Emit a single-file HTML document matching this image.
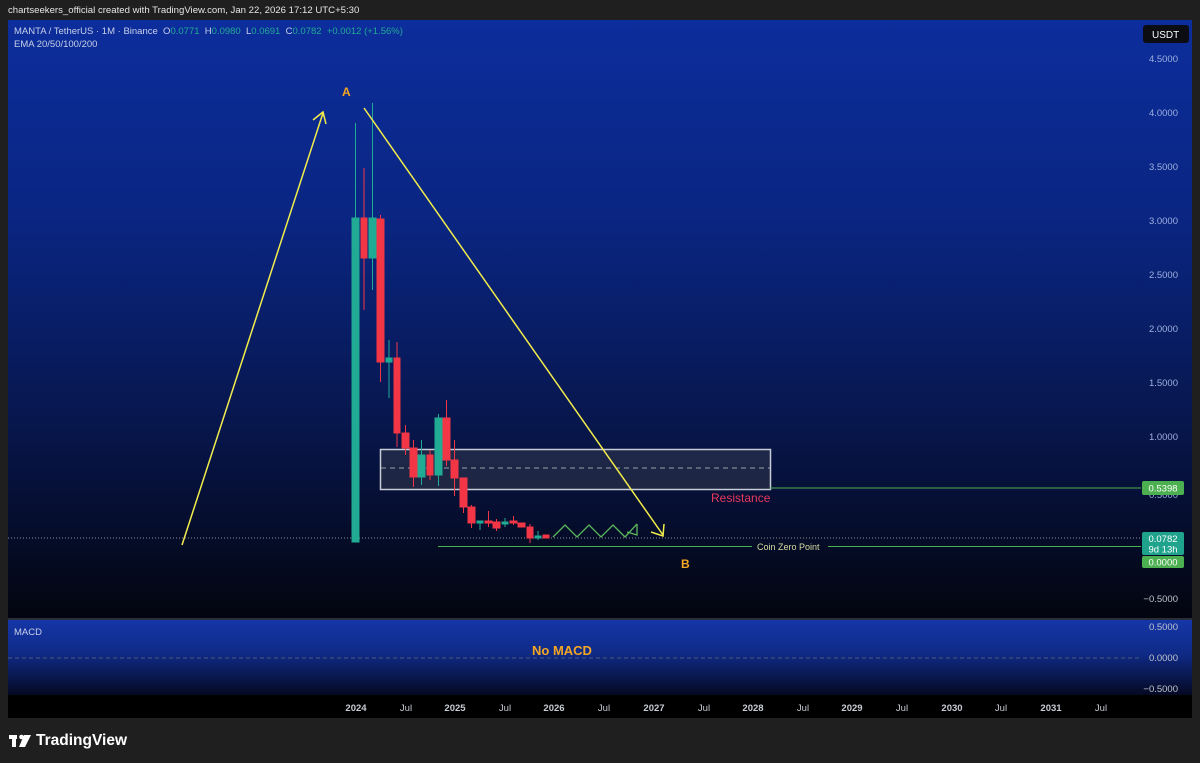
<!DOCTYPE html>
<html><head><meta charset="utf-8"><style>
html,body{margin:0;padding:0;background:#1f1f1f;width:1200px;height:763px;overflow:hidden;font-family:"Liberation Sans",sans-serif}
.t{position:absolute;white-space:nowrap}
</style></head><body>
<div class="t" style="left:8px;top:5px;font-size:9.6px;color:#e6e6e6">chartseekers_official created with TradingView.com, Jan 22, 2026 17:12 UTC+5:30</div>
<svg width="1200" height="763" style="position:absolute;left:0;top:0" xmlns="http://www.w3.org/2000/svg">
<defs>
<linearGradient id="g1" x1="0" y1="0" x2="0" y2="1">
<stop offset="0" stop-color="#0c2d9c"/><stop offset="0.35" stop-color="#0a2580"/><stop offset="0.7" stop-color="#071548"/><stop offset="1" stop-color="#03050f"/></linearGradient>
<linearGradient id="g2" x1="0" y1="0" x2="0" y2="1">
<stop offset="0" stop-color="#1536a8"/><stop offset="0.35" stop-color="#0f2a85"/><stop offset="0.75" stop-color="#050a25"/><stop offset="1" stop-color="#000"/></linearGradient>
</defs>
<rect x="8" y="20" width="1184" height="598" fill="url(#g1)"/>
<rect x="8" y="618" width="1184" height="2" fill="#2a2e3a"/>
<rect x="8" y="620" width="1184" height="98" fill="url(#g2)"/>
<rect x="8" y="695" width="1184" height="23" fill="#000"/>
<rect x="1143" y="25" width="46" height="18" rx="3" fill="#0b0d12"/>
<text x="1152" y="38" font-size="10" fill="#fff">USDT</text>
<rect x="380.5" y="449.5" width="390" height="40" fill="rgba(60,65,80,0.45)" stroke="#c8ccd4" stroke-width="1.5"/>
<line x1="381" y1="468" x2="770" y2="468" stroke="#9aa0ab" stroke-dasharray="5,4"/>
<line x1="770" y1="488" x2="1141" y2="488" stroke="#4caf50"/>
<line x1="8" y1="538" x2="1141" y2="538" stroke="#8a8f99" stroke-dasharray="1,2"/>
<line x1="438" y1="546.5" x2="752" y2="546.5" stroke="#4caf50"/>
<line x1="828" y1="546.5" x2="1141" y2="546.5" stroke="#4caf50"/>
<line x1="8" y1="658" x2="1141" y2="658" stroke="#4a5a7a" stroke-dasharray="4,3"/>
<g stroke-width="1">
<g fill="#22ab94" stroke="#22ab94">
<line x1="355.5" y1="123" x2="355.5" y2="542"/><rect x="352" y="218" width="7" height="324"/>
<line x1="372.5" y1="103" x2="372.5" y2="290"/><rect x="369" y="218" width="7" height="40"/>
<line x1="389" y1="340" x2="389" y2="398"/><rect x="386" y="358" width="6" height="4"/>
<line x1="421.5" y1="440" x2="421.5" y2="485"/><rect x="418" y="455" width="7" height="22"/>
<line x1="438.5" y1="414" x2="438.5" y2="486"/><rect x="435" y="418" width="7" height="57"/>
<line x1="480" y1="521" x2="480" y2="530"/><rect x="477" y="521" width="6" height="2"/>
<line x1="505" y1="518" x2="505" y2="527"/><rect x="502" y="522" width="6" height="2"/>
<line x1="538" y1="531" x2="538" y2="540"/><rect x="535" y="536" width="6" height="2"/>
</g>
<g fill="#f23645" stroke="#f23645">
<line x1="364" y1="168" x2="364" y2="310"/><rect x="361" y="218" width="6" height="40"/>
<line x1="380.5" y1="215" x2="380.5" y2="382"/><rect x="377" y="219" width="7" height="143"/>
<line x1="397" y1="342" x2="397" y2="447"/><rect x="394" y="358" width="6" height="75"/>
<line x1="405.5" y1="425" x2="405.5" y2="455"/><rect x="402" y="433" width="7" height="15"/>
<line x1="413.5" y1="440" x2="413.5" y2="487"/><rect x="410" y="448" width="7" height="29"/>
<line x1="430" y1="450" x2="430" y2="480"/><rect x="427" y="455" width="6" height="20"/>
<line x1="446.5" y1="400" x2="446.5" y2="466"/><rect x="443" y="418" width="7" height="42"/>
<line x1="454.5" y1="440" x2="454.5" y2="496"/><rect x="451" y="460" width="7" height="18"/>
<line x1="463.5" y1="478" x2="463.5" y2="513"/><rect x="460" y="478" width="7" height="29"/>
<line x1="471.5" y1="505" x2="471.5" y2="528"/><rect x="468" y="507" width="7" height="16"/>
<line x1="488.5" y1="511" x2="488.5" y2="527"/><rect x="485" y="521" width="7" height="2"/>
<line x1="496.5" y1="519" x2="496.5" y2="531"/><rect x="493" y="522" width="7" height="6"/>
<line x1="513.5" y1="516" x2="513.5" y2="525"/><rect x="510" y="521" width="7" height="2"/>
<rect x="518" y="523" width="7" height="4"/>
<line x1="530" y1="524" x2="530" y2="543"/><rect x="527" y="527" width="6" height="11"/>
<rect x="543" y="535" width="6" height="3"/>
</g></g>
<polyline points="553,537 565,525 577,537 589,525 601,537 613,525 625,537 637,524" fill="none" stroke="#5cb85c" stroke-width="1.3"/>
<polyline points="627,532 637,535 637,524" fill="none" stroke="#5cb85c" stroke-width="1.3"/>
<g stroke="#f2ec4c" stroke-width="1.5" fill="none">
<line x1="182" y1="545" x2="323" y2="113"/><polyline points="313,120 323,112 326,124"/>
<line x1="364" y1="108" x2="663" y2="535"/><polyline points="651,532 663,536 664,524"/>
</g>
<text x="342" y="96" font-size="12" font-weight="bold" fill="#f5a623">A</text>
<text x="681" y="568" font-size="12" font-weight="bold" fill="#f5a623">B</text>
<text x="711" y="502" font-size="12" fill="#e8385c">Resistance</text>
<text x="757" y="550" font-size="9" fill="#d8dba0">Coin Zero Point</text>
<text x="532" y="655" font-size="13" font-weight="bold" fill="#f5a623">No MACD</text>
<g font-size="9.5" fill="#9fb0e0" text-anchor="end">
<text x="1178" y="62">4.5000</text><text x="1178" y="116">4.0000</text><text x="1178" y="170">3.5000</text>
<text x="1178" y="224">3.0000</text><text x="1178" y="278">2.5000</text><text x="1178" y="332">2.0000</text>
<text x="1178" y="386">1.5000</text><text x="1178" y="440">1.0000</text><text x="1178" y="498">0.5000</text>
<text x="1178" y="602" fill="#c0c4cc">−0.5000</text>
<text x="1178" y="630" fill="#c0c4cc">0.5000</text><text x="1178" y="661" fill="#c0c4cc">0.0000</text><text x="1178" y="692" fill="#c0c4cc">−0.5000</text>
</g>
<rect x="1142" y="481" width="42" height="14" rx="2" fill="#4caf50"/>
<text x="1163" y="491.5" font-size="9.5" fill="#fff" text-anchor="middle">0.5398</text>
<rect x="1142" y="532" width="42" height="23" rx="2" fill="#1fa38c"/>
<text x="1163" y="542" font-size="9.5" fill="#fff" text-anchor="middle">0.0782</text>
<text x="1163" y="552.5" font-size="9.5" fill="#fff" text-anchor="middle">9d 13h</text>
<rect x="1142" y="556" width="42" height="12" rx="2" fill="#4caf50"/>
<text x="1163" y="565.5" font-size="9.5" fill="#fff" text-anchor="middle">0.0000</text>
<g font-size="9.5" fill="#c8ccd4" text-anchor="middle">
<text x="356" y="711" font-weight="bold">2024</text><text x="406" y="711">Jul</text>
<text x="455" y="711" font-weight="bold">2025</text><text x="505" y="711">Jul</text>
<text x="554" y="711" font-weight="bold">2026</text><text x="604" y="711">Jul</text>
<text x="654" y="711" font-weight="bold">2027</text><text x="704" y="711">Jul</text>
<text x="753" y="711" font-weight="bold">2028</text><text x="803" y="711">Jul</text>
<text x="852" y="711" font-weight="bold">2029</text><text x="902" y="711">Jul</text>
<text x="952" y="711" font-weight="bold">2030</text><text x="1001" y="711">Jul</text>
<text x="1051" y="711" font-weight="bold">2031</text><text x="1101" y="711">Jul</text>
</g>
<g fill="#fff">
<rect x="9" y="735" width="8" height="4"/><rect x="12" y="735" width="4" height="12"/>
<circle cx="21.5" cy="737" r="2.3"/>
<polygon points="24,735 31,735 25,747 19,747"/>
</g>
</svg>
<div class="t" style="left:14px;top:26px;font-size:9.5px;color:#c8d0e8">MANTA / TetherUS · 1M · Binance &nbsp;O<span style="color:#22ab94">0.0771</span> &nbsp;H<span style="color:#22ab94">0.0980</span> &nbsp;L<span style="color:#22ab94">0.0691</span> &nbsp;C<span style="color:#22ab94">0.0782</span> &nbsp;<span style="color:#22ab94">+0.0012 (+1.56%)</span></div>
<div class="t" style="left:14px;top:39px;font-size:9.5px;color:#c8d0e8">EMA 20/50/100/200</div>
<div class="t" style="left:14px;top:627px;font-size:9.5px;color:#c8d0e8">MACD</div>
<div class="t" style="left:36px;top:732px;font-size:15.5px;font-weight:bold;color:#fff">TradingView</div>
</body></html>
